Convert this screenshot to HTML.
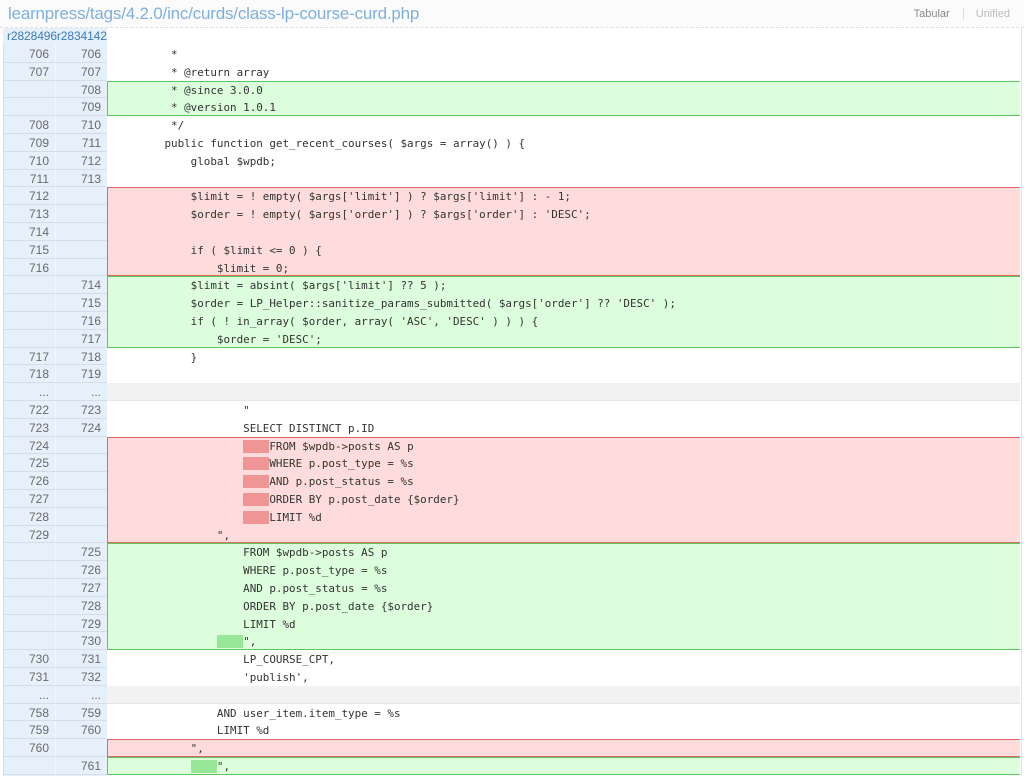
<!DOCTYPE html>
<html><head><meta charset="utf-8"><style>
body{margin:0;background:#fff;width:1024px;height:776px;overflow:hidden;position:relative;font-family:"Liberation Sans",sans-serif}
.title{position:absolute;left:8px;top:4px;font-size:17px;color:#7fb0dc;letter-spacing:-0.2px}
.hdr{position:absolute;left:0;top:0;width:1024px;height:27px;background:#fbfbfb;border-bottom:1px dashed #e0e0e0}
.tabs{position:absolute;right:14px;top:8px;font-size:11px;color:#888}
.tabs span.u{color:#bbb;border-left:1px solid #ddd;padding-left:12px;margin-left:10px}
.rev{position:absolute;left:3px;top:28px;width:1017px;height:17px;background:#fff;}
.rev div{position:absolute;left:0;top:0;width:104px;height:17px;background:#e6f0fa}
.rev span{position:absolute;left:4px;top:0;font-size:12px;color:#3a7ab8;line-height:17px;white-space:nowrap;letter-spacing:-0.1px}
.g{position:absolute;left:3px;top:45px;width:104px;height:731px;background:#e6f0fa;border-left:1px solid #d8dde3;box-sizing:border-box}
.sep{position:absolute;left:55px;top:45px;width:1px;height:731px;background:#f5f8fb}
.rl{position:absolute;left:1021px;top:28px;width:1px;height:748px;background:#e2e2e2}
.row{position:absolute;left:3px;width:1018px;height:17.8px;font-size:12px;color:#6a6a6a;line-height:17.8px}
.row .a,.row .b{position:absolute;width:46px;text-align:right;top:1px}
.row .a{left:0}.row .b{left:52px}
.row .c{position:absolute;left:109px;top:1px;font-family:"DejaVu Sans Mono","Liberation Mono",monospace;font-size:10.9px;color:#333;white-space:pre;line-height:17.8px}
.row::after{content:"";position:absolute;left:0;bottom:0;width:104px;height:1px;background:#d5dee8}
.box{position:absolute;left:107px;width:913px;box-sizing:border-box}
.del{background:#ffdcdc;border:1px solid #e06666;border-right:none}
.add{background:#dcfedc;border:1px solid #5dc65d;border-right:none}
.ell{background:#f2f2f2;border-bottom:1px solid #e6e6e6}
.hd{background:#f09595}.ha{background:#98e698}
</style></head><body>
<div class="hdr"></div>
<div class="title">learnpress/tags/4.2.0/inc/curds/class-lp-course-curd.php</div>
<div class="tabs">Tabular <span class="u">Unified</span></div>
<div class="rev"><div></div><span>r2828496r2834142</span></div>
<div class="g"></div>
<div class="box add" style="top:80.6px;height:35.6px"></div>
<div class="box del" style="top:187.4px;height:89px"></div>
<div class="box add" style="top:276.4px;height:71.2px"></div>
<div class="box ell" style="top:383.2px;height:17.8px"></div>
<div class="box del" style="top:436.6px;height:106.8px"></div>
<div class="box add" style="top:543.4px;height:106.8px"></div>
<div class="box ell" style="top:685.8px;height:17.8px"></div>
<div class="box del" style="top:739.2px;height:17.8px"></div>
<div class="box add" style="top:757px;height:17.8px"></div>
<div class="sep"></div><div class="rl"></div>

<div class="row" style="top:45px"><span class="a">706</span><span class="b">706</span><span class="c">         *</span></div>
<div class="row" style="top:62.8px"><span class="a">707</span><span class="b">707</span><span class="c">         * @return array</span></div>
<div class="row" style="top:80.6px"><span class="a"></span><span class="b">708</span><span class="c">         * @since 3.0.0</span></div>
<div class="row" style="top:98.4px"><span class="a"></span><span class="b">709</span><span class="c">         * @version 1.0.1</span></div>
<div class="row" style="top:116.2px"><span class="a">708</span><span class="b">710</span><span class="c">         */</span></div>
<div class="row" style="top:134px"><span class="a">709</span><span class="b">711</span><span class="c">        public function get_recent_courses( $args = array() ) {</span></div>
<div class="row" style="top:151.8px"><span class="a">710</span><span class="b">712</span><span class="c">            global $wpdb;</span></div>
<div class="row" style="top:169.6px"><span class="a">711</span><span class="b">713</span><span class="c"></span></div>
<div class="row" style="top:187.4px"><span class="a">712</span><span class="b"></span><span class="c">            $limit = ! empty( $args['limit'] ) ? $args['limit'] : - 1;</span></div>
<div class="row" style="top:205.2px"><span class="a">713</span><span class="b"></span><span class="c">            $order = ! empty( $args['order'] ) ? $args['order'] : 'DESC';</span></div>
<div class="row" style="top:223px"><span class="a">714</span><span class="b"></span><span class="c"></span></div>
<div class="row" style="top:240.8px"><span class="a">715</span><span class="b"></span><span class="c">            if ( $limit &lt;= 0 ) {</span></div>
<div class="row" style="top:258.6px"><span class="a">716</span><span class="b"></span><span class="c">                $limit = 0;</span></div>
<div class="row" style="top:276.4px"><span class="a"></span><span class="b">714</span><span class="c">            $limit = absint( $args['limit'] ?? 5 );</span></div>
<div class="row" style="top:294.2px"><span class="a"></span><span class="b">715</span><span class="c">            $order = LP_Helper::sanitize_params_submitted( $args['order'] ?? 'DESC' );</span></div>
<div class="row" style="top:312px"><span class="a"></span><span class="b">716</span><span class="c">            if ( ! in_array( $order, array( 'ASC', 'DESC' ) ) ) {</span></div>
<div class="row" style="top:329.8px"><span class="a"></span><span class="b">717</span><span class="c">                $order = 'DESC';</span></div>
<div class="row" style="top:347.6px"><span class="a">717</span><span class="b">718</span><span class="c">            }</span></div>
<div class="row" style="top:365.4px"><span class="a">718</span><span class="b">719</span><span class="c"></span></div>
<div class="row" style="top:383.2px"><span class="a">...</span><span class="b">...</span><span class="c"></span></div>
<div class="row" style="top:401px"><span class="a">722</span><span class="b">723</span><span class="c">                    "</span></div>
<div class="row" style="top:418.8px"><span class="a">723</span><span class="b">724</span><span class="c">                    SELECT DISTINCT p.ID</span></div>
<div class="row" style="top:436.6px"><span class="a">724</span><span class="b"></span><span class="c">                    <span class="hd">    </span>FROM $wpdb-&gt;posts AS p</span></div>
<div class="row" style="top:454.4px"><span class="a">725</span><span class="b"></span><span class="c">                    <span class="hd">    </span>WHERE p.post_type = %s</span></div>
<div class="row" style="top:472.2px"><span class="a">726</span><span class="b"></span><span class="c">                    <span class="hd">    </span>AND p.post_status = %s</span></div>
<div class="row" style="top:490px"><span class="a">727</span><span class="b"></span><span class="c">                    <span class="hd">    </span>ORDER BY p.post_date {$order}</span></div>
<div class="row" style="top:507.8px"><span class="a">728</span><span class="b"></span><span class="c">                    <span class="hd">    </span>LIMIT %d</span></div>
<div class="row" style="top:525.6px"><span class="a">729</span><span class="b"></span><span class="c">                ",</span></div>
<div class="row" style="top:543.4px"><span class="a"></span><span class="b">725</span><span class="c">                    FROM $wpdb-&gt;posts AS p</span></div>
<div class="row" style="top:561.2px"><span class="a"></span><span class="b">726</span><span class="c">                    WHERE p.post_type = %s</span></div>
<div class="row" style="top:579px"><span class="a"></span><span class="b">727</span><span class="c">                    AND p.post_status = %s</span></div>
<div class="row" style="top:596.8px"><span class="a"></span><span class="b">728</span><span class="c">                    ORDER BY p.post_date {$order}</span></div>
<div class="row" style="top:614.6px"><span class="a"></span><span class="b">729</span><span class="c">                    LIMIT %d</span></div>
<div class="row" style="top:632.4px"><span class="a"></span><span class="b">730</span><span class="c">                <span class="ha">    </span>",</span></div>
<div class="row" style="top:650.2px"><span class="a">730</span><span class="b">731</span><span class="c">                    LP_COURSE_CPT,</span></div>
<div class="row" style="top:668px"><span class="a">731</span><span class="b">732</span><span class="c">                    'publish',</span></div>
<div class="row" style="top:685.8px"><span class="a">...</span><span class="b">...</span><span class="c"></span></div>
<div class="row" style="top:703.6px"><span class="a">758</span><span class="b">759</span><span class="c">                AND user_item.item_type = %s</span></div>
<div class="row" style="top:721.4px"><span class="a">759</span><span class="b">760</span><span class="c">                LIMIT %d</span></div>
<div class="row" style="top:739.2px"><span class="a">760</span><span class="b"></span><span class="c">            ",</span></div>
<div class="row" style="top:757px"><span class="a"></span><span class="b">761</span><span class="c">            <span class="ha">    </span>",</span></div>
</body></html>
